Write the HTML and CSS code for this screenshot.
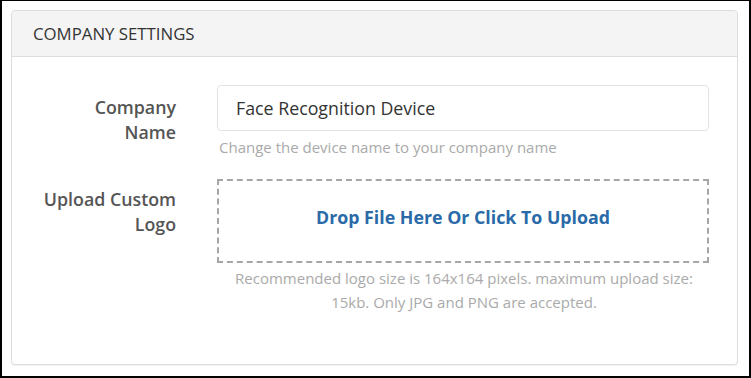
FILE: index.html
```html
<!DOCTYPE html>
<html lang="en">
<head>
  <meta charset="UTF-8">
  <meta name="viewport" content="width=device-width, initial-scale=1.0">
  <title>Company Settings</title>
  <link rel="stylesheet" href="styles.css">
</head>
<body>
  <div class="frame">
    <div class="panel">
      <div class="panel-heading">COMPANY SETTINGS</div>

      <div class="panel-body">
        <!-- Company name -->
        <div class="form-row">
          <label class="form-label" for="company-name">Company<br>Name</label>
          <div class="form-field">
            <input type="text" id="company-name" class="text-input" value="Face Recognition Device">
            <p class="help">Change the device name to your company name</p>
          </div>
        </div>

        <!-- Logo upload -->
        <div class="form-row">
          <label class="form-label form-label-tight">Upload Custom<br>Logo</label>
          <div class="form-field">
            <div class="dropzone">Drop File Here Or Click To Upload</div>
            <p class="help help-center">Recommended logo size is 164x164 pixels. maximum upload size:<br>15kb. Only JPG and PNG are accepted.</p>
          </div>
        </div>
      </div>
    </div>
  </div>
</body>
</html>
```

FILE: styles.css
```css
html, body {
  margin: 0;
  height: 100%;
}

body {
  font-family: "Open Sans", Arial, sans-serif;
  background-color: #fff;
  color: #333;
}

.frame {
  box-sizing: border-box;
  height: 378px;
  border: 2px solid #000;
  border-top-width: 1px;
  padding: 9px 11px 11px 9px;
}

.panel {
  box-sizing: border-box;
  height: 100%;
  border: 1px solid #ddd;
  border-radius: 4px;
  box-shadow: 0 1px 1px rgba(0, 0, 0, 0.06);
  background: #fff;
}

.panel-heading {
  height: 45px;
  line-height: 45px;
  padding-left: 21px;
  font-size: 16.8px;
  color: #333;
  background-color: #f4f4f4;
  border-bottom: 1px solid #ddd;
  border-radius: 4px 4px 0 0;
}

.panel-body {
  padding: 28px 28px 0 0;
}

.form-row {
  display: grid;
  grid-template-columns: 164px 1fr;
  column-gap: 41px;
  margin-bottom: 20px;
}

.form-label {
  text-align: right;
  font-size: 17.8px;
  font-weight: 600;
  line-height: 25px;
  color: #555;
  padding-top: 10px;
}

.form-label-tight {
  padding-top: 8px;
}

.text-input {
  box-sizing: border-box;
  width: 100%;
  height: 46px;
  border: 1px solid #e3e3e3;
  border-radius: 4px;
  padding: 0 18px;
  font-family: inherit;
  font-size: 17.8px;
  color: #333;
  outline: none;
}

.help {
  margin: 4px 0 0 2px;
  font-size: 15px;
  line-height: 24px;
  color: #aaa;
}

.help-center {
  text-align: center;
  margin-top: 3px;
}

.dropzone {
  box-sizing: border-box;
  height: 84px;
  padding-bottom: 8px;
  border: 2px dashed #a6a6a6;
  display: flex;
  align-items: center;
  justify-content: center;
  font-size: 17.8px;
  font-weight: 700;
  color: #2a6aa8;
  cursor: pointer;
}
```
